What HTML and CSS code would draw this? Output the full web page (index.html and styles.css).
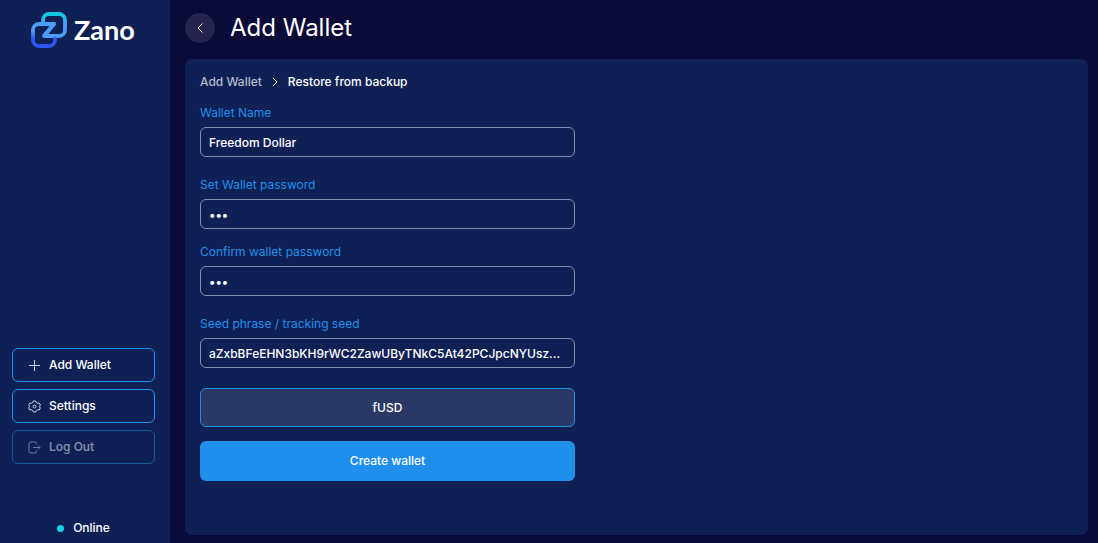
FILE: index.html
```html
<!DOCTYPE html>
<html lang="en">
<head>
<meta charset="utf-8">
<meta name="viewport" content="width=device-width, initial-scale=1">
<title>Zano – Add Wallet</title>
<link rel="stylesheet" href="styles.css">
</head>
<body>
<div class="app">
  <aside class="sidebar">
    <div class="logo">
      <svg class="logo-mark" viewBox="0 0 36 36" fill="none" stroke-width="3.800" stroke-linejoin="round" aria-hidden="true">
        <defs>
          <linearGradient id="top" gradientUnits="userSpaceOnUse" x1="0" y1="2" x2="0" y2="24"><stop offset=".1" stop-color="#16c6df"/><stop offset=".5" stop-color="#4f9cf8"/></linearGradient>
          <linearGradient id="bottom" gradientUnits="userSpaceOnUse" x1="0" y1="12" x2="0" y2="34"><stop offset=".3" stop-color="#4f9cf8"/><stop offset=".7" stop-color="#2a56f5"/></linearGradient>
        </defs>
        <path d="M12 11V8a6 6 0 0 1 6-6h10a6 6 0 0 1 6 6v10a6 6 0 0 1-6 6H13" stroke="url(#top)"/>
        <path d="M24 25v3a6 6 0 0 1-6 6H8a6 6 0 0 1-6-6V18a6 6 0 0 1 6-6h15L13 24" stroke="url(#bottom)"/>
        <path d="M16 12h7L13 24h7" stroke="#4f9cf8"/>
      </svg>
      <span class="logo-name">Zano</span>
    </div>
    <nav class="menu">
      <button class="menu-button" type="button">
        <svg class="icon" viewBox="0 0 13 13" aria-hidden="true"><path d="M6.5 1v11M1 6.5h11"/></svg>
        Add Wallet
      </button>
      <button class="menu-button" type="button">
        <svg class="icon" viewBox="0 0 13 13" aria-hidden="true"><path d="M5.3 1h2.4l.5 1.5 1.5.8 1.5-.3 1.2 2-1 1.5 1 1.5-1.2 2-1.5-.3-1.5.8-.5 1.5H5.3l-.5-1.5-1.5-.8-1.5.3-1.2-2 1-1.5-1-1.5 1.2-2 1.5.3 1.5-.8z"/><circle cx="6.5" cy="6.5" r="1.5"/></svg>
        Settings
      </button>
      <button class="menu-button" type="button" disabled>
        <svg class="icon" viewBox="0 0 13 13" aria-hidden="true"><path d="M8.500 3.500V2.500a1.500 1.500 0 0 0-1.500-1.500H3a2 2 0 0 0-2 2v7a2 2 0 0 0 2 2h4a1.500 1.500 0 0 0 1.500-1.500v-1M5 6.500h7M10 4.500l2 2-2 2"/></svg>
        Log Out
      </button>
    </nav>
    <div class="status"><span class="status-dot"></span>Online</div>
  </aside>
  <main class="content">
    <header class="page-header">
      <button class="back" type="button" aria-label="Back">
        <svg class="back-icon" viewBox="0 0 12 12" aria-hidden="true"><path d="M8.500 1.500 4 6 8.500 10.500"/></svg>
      </button>
      <h1 class="title">Add Wallet</h1>
    </header>
    <section class="panel">
      <nav class="breadcrumbs" aria-label="Breadcrumb">
        <a class="crumb" href="#">Add Wallet</a>
        <svg class="crumb-icon" viewBox="0 0 6 10" aria-hidden="true"><path d="M1 1l4 4-4 4"/></svg>
        <span>Restore from backup</span>
      </nav>
      <form class="form">
        <div class="field">
          <label class="label" for="name">Wallet Name</label>
          <input class="input" id="name" type="text" value="Freedom Dollar">
        </div>
        <div class="field field-close">
          <label class="label" for="password">Set Wallet password</label>
          <input class="input" id="password" type="password" value="abc">
        </div>
        <div class="field">
          <label class="label" for="confirm">Confirm wallet password</label>
          <input class="input" id="confirm" type="password" value="abc">
        </div>
        <div class="field">
          <label class="label" for="seed">Seed phrase / tracking seed</label>
          <input class="input" id="seed" type="text" value="aZxbBFeEHN3bKH9rWC2ZawUByTNkC5At42PCJpcNYUsz...">
        </div>
        <button class="button button-file" type="button">fUSD</button>
        <button class="button button-primary" type="button">Create wallet</button>
      </form>
    </section>
  </main>
</div>
</body>
</html>
```
FILE: styles.css
```css
* { box-sizing: border-box; }
body {
  margin: 0;
  background: #0b0b3a;
  color: #fff;
  font: 12px/16px Inter, "Liberation Sans", sans-serif;
}
button, input { font: inherit; color: inherit; margin: 0; }
svg { flex: none; fill: none; }
.app { display: flex; min-height: 100vh; }
.sidebar {
  width: 170px;
  flex: none;
  display: flex;
  flex-direction: column;
  padding: 12px 15px 7px 12px;
  background: #0f2055;
}
.logo { display: flex; align-items: center; gap: 7px; padding-left: 19px; }
.logo-mark { width: 36px; height: 36px; }
.logo-name { font: 700 27px/36px Lato, sans-serif; }
.menu { display: flex; flex-direction: column; gap: 7px; margin-top: auto; }
.menu-button {
  display: flex;
  align-items: center;
  gap: 8px;
  height: 34px;
  padding: 0 15px;
  border: 1px solid #1f8feb;
  border-radius: 6px;
  background: none;
  font-weight: 500;
}
.menu-button:disabled { opacity: .5; }
.icon { width: 13px; height: 13px; stroke: #c9cfdf; stroke-width: 1; }
.status { display: flex; align-items: center; justify-content: center; gap: 9px; margin-top: 56px; font-weight: 500; }
.status-dot { width: 7px; height: 7px; border-radius: 50%; background: #16d1e6; }
.content { flex: 1; min-width: 0; display: flex; flex-direction: column; padding: 12px 10px 8px 15px; }
.page-header { display: flex; align-items: center; gap: 15px; height: 32px; margin-bottom: 15px; }
.back {
  display: flex;
  align-items: center;
  justify-content: center;
  width: 30px;
  height: 30px;
  padding: 0;
  border: 0;
  border-radius: 50%;
  background: #24244f;
}
.back-icon { width: 12px; height: 12px; stroke: #fff; stroke-width: 1; }
.title { margin: 0; font-size: 24px; line-height: 32px; font-weight: 400; }
.panel { flex: 1; padding: 15px; border-radius: 7px; background: #0f2055; }
.breadcrumbs { display: flex; align-items: center; gap: 10px; margin-bottom: 15px; font-weight: 500; }
.crumb { color: #b7bccc; text-decoration: none; }
.crumb-icon { width: 6px; height: 10px; stroke: #fff; stroke-width: 1; }
.form { display: flex; flex-direction: column; max-width: 375px; }
.field { display: flex; flex-direction: column; gap: 6px; margin-bottom: 20px; }
.field-close { margin-bottom: 15px; }
.label { color: #1f8feb; }
.input {
  width: 100%;
  height: 30px;
  padding: 0 8px;
  border: 1px solid #8790aa;
  border-radius: 6px;
  background: none;
  outline: 0;
  font-weight: 500;
  text-overflow: ellipsis;
}
.button { height: 40px; border: 0; border-radius: 6px; font-weight: 500; }
.button-file { height: 39px; margin-bottom: 14px; border: 1px solid #1f8feb; background: #293865; }
.button-primary { background: #1f8feb; }
```
